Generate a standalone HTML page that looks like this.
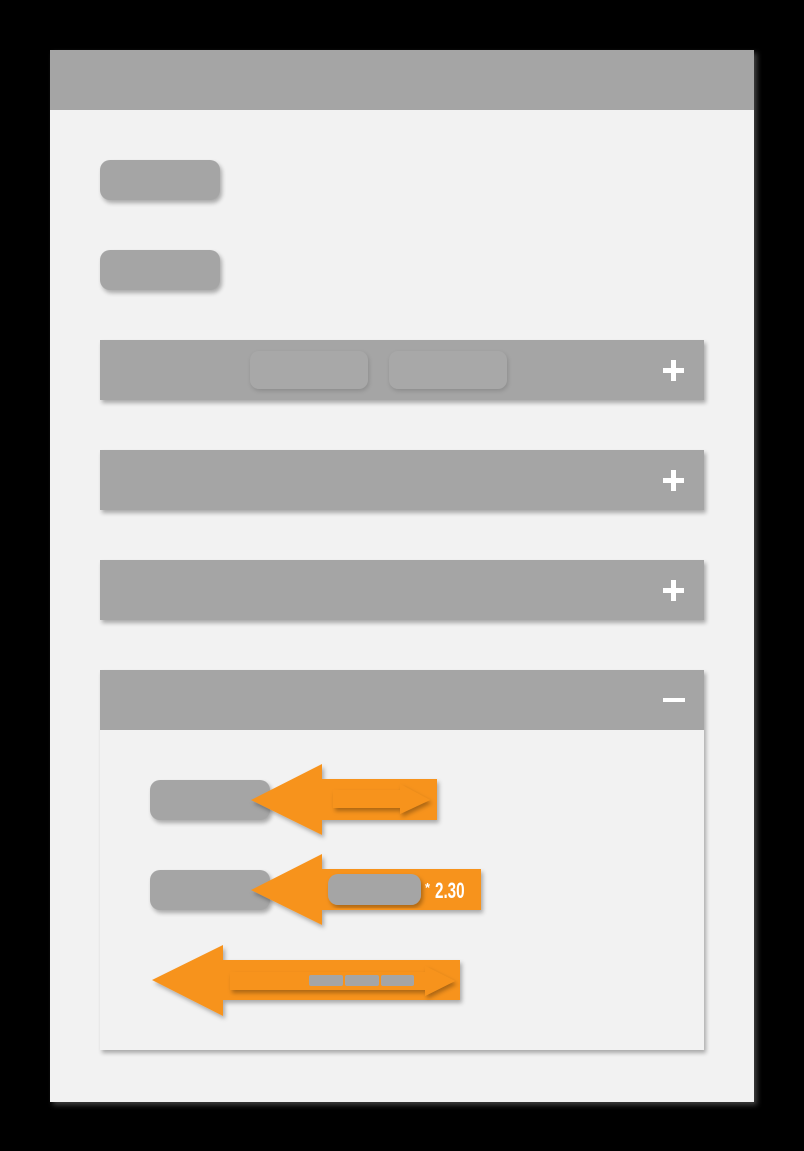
<!DOCTYPE html><html><head><style>
body{margin:0;width:804px;height:1151px;background:#000;position:relative;overflow:hidden;font-family:"Liberation Sans",sans-serif}
.a{position:absolute}
.g{background:#a5a5a5}
.btn{border-radius:10px;box-shadow:2px 3px 4px rgba(0,0,0,.3)}
.bar{box-shadow:2px 3px 4px rgba(0,0,0,.3)}
.ph{position:absolute;left:563px;top:28px;width:21px;height:5px;background:#fff}
.pv{position:absolute;left:571px;top:20px;width:5px;height:21px;background:#fff}
</style></head><body>
<div class="a" style="left:50px;top:50px;width:704px;height:1052px;background:#f2f2f2;box-shadow:3px 3px 5px rgba(80,80,80,.8)"></div>
<div class="a g" style="left:50px;top:50px;width:704px;height:60px"></div>
<div class="a g btn" style="left:100px;top:160px;width:120px;height:40px"></div>
<div class="a g btn" style="left:100px;top:250px;width:120px;height:40px"></div>
<div class="a g bar" style="left:100px;top:340px;width:604px;height:60px"><div class="ph"></div><div class="pv"></div>
<div class="a" style="left:150px;top:11px;width:118px;height:38px;border-radius:9px;background:#a8a8a8;box-shadow:1px 2px 4px rgba(0,0,0,.15)"></div>
<div class="a" style="left:289px;top:11px;width:118px;height:38px;border-radius:9px;background:#a8a8a8;box-shadow:1px 2px 4px rgba(0,0,0,.15)"></div></div>
<div class="a g bar" style="left:100px;top:450px;width:604px;height:60px"><div class="ph"></div><div class="pv"></div></div>
<div class="a g bar" style="left:100px;top:560px;width:604px;height:60px"><div class="ph"></div><div class="pv"></div></div>
<div class="a bar" style="left:100px;top:670px;width:604px;height:380px;background:#f2f2f2"></div>
<div class="a g" style="left:100px;top:670px;width:604px;height:60px"><div class="a" style="left:563px;top:28px;width:22px;height:4px;background:#fff"></div></div>
<div class="a g btn" style="left:150px;top:780px;width:120px;height:40px"></div>
<div class="a g btn" style="left:150px;top:870px;width:120px;height:40px"></div>
<svg class="a" style="left:0;top:0" width="804" height="1151">
<defs><filter id="s"><feDropShadow dx="2" dy="3" stdDeviation="2" flood-opacity=".3"/></filter></defs>
<g fill="#f7931e" filter="url(#s)">
<path d="M251 800L322 764V779H437V820H322V835Z"/>
<path d="M251 890L322 854V869H481V910H322V925Z"/>
<path d="M152 980L223 945V960H460V1000H223V1016Z"/>
</g>
<g fill="#f7931e" filter="url(#s)">
<path d="M333 790H400V784L430 800L400 814V808H333Z"/>
<path d="M230 972H425V966L455 981L425 996V990H230Z"/>
</g>
<g fill="#a5a5a5"><rect x="309" y="975" width="34" height="11" rx="2"/><rect x="345" y="975" width="34" height="11" rx="2"/><rect x="381" y="975" width="33" height="11" rx="2"/></g>
<rect x="328" y="874" width="93" height="31" rx="10" fill="#a5a5a5" filter="url(#s)"/>
<text x="425" y="892" fill="#fff" font-size="13" font-weight="bold">*</text>
<text transform="translate(435 898) scale(0.8 1.15)" fill="#fff" font-size="19" font-weight="bold">2.30</text>
</svg>
</body></html>
